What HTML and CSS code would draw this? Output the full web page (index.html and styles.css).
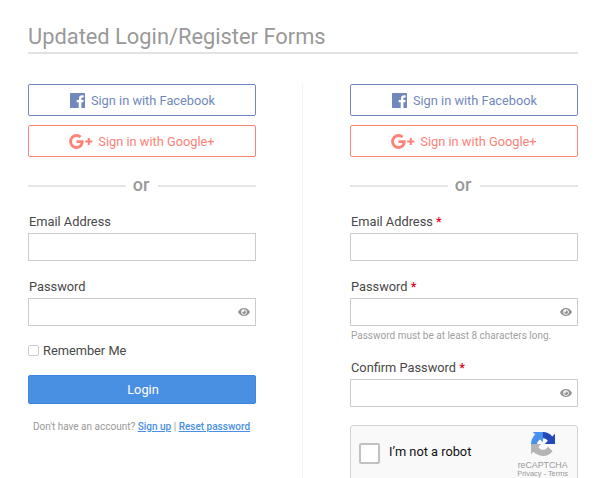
FILE: index.html
```html
<!DOCTYPE html>
<html lang="en">
<head>
    <meta charset="UTF-8">
    <meta name="viewport" content="width=device-width, initial-scale=1.0">
    <title>Login / Register</title>
    <link rel="stylesheet" href="styles.css">
</head>
<body>
<svg class="sprite" width="0" height="0">
    <symbol id="icon-facebook" viewBox="0 0 15 15">
        <path fill-rule="evenodd" d="M.7 0h13.6q.7 0 .7.7v13.6q0 .7-.7.7h-2.900V9.200h1.900l.3-2.300h-2.200V5.500c0-.7.2-1.100 1.100-1.100h1.200V2.400c-.3 0-.9-.1-1.700-.1-1.800 0-3 1.100-3 3v1.600H6.700v2.300h2V15H.7Q0 15 0 14.300V.7Q0 0 .7 0z"/>
    </symbol>
    <symbol id="icon-google" viewBox="0 0 24 15">
        <path d="M7.500 6.200v2.700h4c-.4 1.800-1.800 3.100-4 3.100a4.500 4.500 0 0 1 0-9c1.200 0 2.200.4 3 1.100l2.100-2.100A7.300 7.300 0 0 0 7.500.1a7.400 7.400 0 1 0 0 14.800c4.300 0 7.100-3 7.100-7.300 0-.5 0-.9-.1-1.400zM18.700 4v2.500h-2.500v2h2.500V11h2.100V8.500h2.500v-2h-2.500V4z"/>
    </symbol>
    <symbol id="icon-eye" viewBox="0 0 12 8">
        <path fill-rule="evenodd" d="M6 0C3.400 0 1.200 1.500 0 4c1.200 2.500 3.400 4 6 4s4.800-1.500 6-4C10.800 1.500 8.600 0 6 0zm0 1.200a2.800 2.800 0 1 1 0 5.600 2.800 2.800 0 0 1 0-5.600z"/>
        <path d="M6 2.200v1.600H4.200A1.900 1.900 0 1 0 6 2.200z"/>
    </symbol>
</svg>

<h1 class="page-title">Updated Login/Register Forms</h1>

<div class="forms">
    <form class="form">
        <button type="button" class="social facebook"><svg width="15" height="15"><use href="#icon-facebook"/></svg>Sign in with Facebook</button>
        <button type="button" class="social google"><svg width="24" height="15"><use href="#icon-google"/></svg>Sign in with Google+</button>
        <div class="or"><span>or</span></div>
        <div class="field">
            <label for="login-email">Email Address</label>
            <div class="input-box"><input type="email" id="login-email"></div>
        </div>
        <div class="field">
            <label for="login-password">Password</label>
            <div class="input-box">
                <input type="password" id="login-password">
                <svg class="eye" width="12" height="8"><use href="#icon-eye"/></svg>
            </div>
        </div>
        <label class="remember"><input type="checkbox">Remember Me</label>
        <button type="button" class="login-btn">Login</button>
        <p class="account">Don't have an account? <a href="#">Sign up</a> | <a href="#">Reset password</a></p>
    </form>

    <form class="form register">
        <button type="button" class="social facebook"><svg width="15" height="15"><use href="#icon-facebook"/></svg>Sign in with Facebook</button>
        <button type="button" class="social google"><svg width="24" height="15"><use href="#icon-google"/></svg>Sign in with Google+</button>
        <div class="or"><span>or</span></div>
        <div class="field">
            <label for="reg-email">Email Address <span class="required">*</span></label>
            <div class="input-box"><input type="email" id="reg-email"></div>
        </div>
        <div class="field">
            <label for="reg-password">Password <span class="required">*</span></label>
            <div class="input-box">
                <input type="password" id="reg-password">
                <svg class="eye" width="12" height="8"><use href="#icon-eye"/></svg>
            </div>
            <p class="hint">Password must be at least 8 characters long.</p>
        </div>
        <div class="field">
            <label for="reg-confirm">Confirm Password <span class="required">*</span></label>
            <div class="input-box">
                <input type="password" id="reg-confirm">
                <svg class="eye" width="12" height="8"><use href="#icon-eye"/></svg>
            </div>
        </div>
        <div class="captcha">
            <input type="checkbox" id="robot">
            <label for="robot">I’m not a robot</label>
            <div class="captcha-brand">
                <svg width="24" height="24" viewBox="0 0 64 64">
                    <path fill="#2348b8" d="M64 31.955l-.033-1.370V4.687l-7.160 7.160C50.948 4.674 42.033.093 32.050.093c-10.400 0-19.622 4.960-25.458 12.640l11.736 11.860a15.550 15.550 0 0 1 4.754-5.334c2.050-1.600 4.952-2.906 8.968-2.906.485 0 .86.057 1.135.163 4.976.393 9.288 3.140 11.828 7.124l-8.307 8.307L64 31.953"/>
                    <path fill="#4a90f0" d="M31.862.094l-1.370.033H4.594l7.160 7.160C4.580 13.147 0 22.062 0 32.046c0 10.400 4.960 19.622 12.640 25.458L24.500 45.768a15.550 15.550 0 0 1-5.334-4.754c-1.600-2.050-2.906-4.952-2.906-8.968 0-.485.057-.86.163-1.135.393-4.976 3.140-9.288 7.124-11.828l8.307 8.307L31.860.095"/>
                    <path fill="#b5b5b5" d="M.095 32.045l.033 1.370v25.898l7.160-7.160c5.860 7.173 14.774 11.754 24.758 11.754 10.400 0 19.622-4.960 25.458-12.640l-11.736-11.860a15.550 15.550 0 0 1-4.754 5.334c-2.050 1.600-4.952 2.906-8.968 2.906-.485 0-.86-.057-1.135-.163-4.976-.393-9.288-3.140-11.828-7.124l8.307-8.307L.095 32.045"/>
                </svg>
                <span class="captcha-name">reCAPTCHA</span>
                <span class="captcha-links">Privacy - Terms</span>
            </div>
        </div>
    </form>
</div>
</body>
</html>
```
FILE: styles.css
```css
* {
    box-sizing: border-box;
}
body {
    margin: 0;
    height: 478px;
    padding: 20px 32px 0 28px;
    overflow: hidden;
    background-color: #fff;
    color: #484848;
    font-family: Roboto, Arial, sans-serif;
    font-size: 12.8px;
}
.sprite {
    position: absolute;
}
.page-title {
    height: 34px;
    margin: 0 0 30px;
    border-bottom: 2px solid #e2e2e2;
    color: #999;
    font-size: 21.85px;
    font-weight: 400;
    line-height: 33px;
}
.forms {
    display: flex;
    height: 400px;
}
.form {
    width: 275px;
    padding-right: 47px;
    border-right: 1px solid #f3f3f3;
    flex-shrink: 0;
}
.form.register {
    margin-left: 47px;
    padding-right: 0;
    width: 228px;
    border-right: none;
}
.social {
    display: flex;
    align-items: center;
    justify-content: center;
    width: 228px;
    height: 32px;
    margin-bottom: 9px;
    padding: 0;
    border: 1px solid;
    border-radius: 2px;
    background: #fff;
    font-family: inherit;
    font-size: 12.8px;
    cursor: pointer;
}
.social svg {
    fill: currentColor;
}
.facebook {
    padding-left: 1px;
    color: #7188bd;
}
.facebook svg {
    margin-right: 6px;
}
.google {
    color: #fd8278;
}
.google svg {
    margin-right: 5px;
}
.or {
    display: flex;
    align-items: center;
    gap: 8px;
    width: 228px;
    height: 22px;
    margin: 18px 0 16px;
    color: #999;
    font-size: 18px;
    font-weight: 500;
}
.or span {
    padding: 0 1px 3px 0;
    margin-left: -1px;
}
.or::before, .or::after {
    content: "";
    flex: 1;
    height: 2px;
    background-color: #e5e5e5;
}
.field {
    width: 228px;
    margin-bottom: 17px;
}
.field label {
    display: block;
    height: 20px;
    padding-left: 1px;
    line-height: 17px;
}
.required {
    color: #e2001f;
    font-weight: 500;
}
.input-box {
    display: flex;
    align-items: center;
    height: 28px;
    padding-right: 5px;
    border: 1px solid #ccc;
}
.input-box input {
    flex: 1;
    min-width: 0;
    border: none;
    outline: none;
    background: none;
}
.eye {
    fill: #949494;
}
.hint {
    margin: 4px 0 0 1px;
    color: #a0a0a0;
    font-size: 10px;
    line-height: 12px;
}
.remember {
    display: flex;
    align-items: center;
    gap: 4px;
    height: 15px;
    margin-top: 17px;
}
.remember input {
    appearance: none;
    width: 11px;
    height: 11px;
    margin: 0;
    border: 1px solid #ccc;
    border-radius: 2px;
}
.login-btn {
    display: block;
    width: 228px;
    height: 29px;
    margin-top: 17px;
    padding: 0 0 0 2px;
    border: 1px solid #3d87e0;
    border-radius: 2px;
    background-color: #4a90e2;
    color: #fff;
    font-family: inherit;
    font-size: 12.8px;
    cursor: pointer;
}
.account {
    width: 227px;
    margin: 17px 0 0;
    color: #999;
    font-size: 10px;
    line-height: 12px;
    text-align: center;
    white-space: nowrap;
}
.account a {
    color: #4a90e2;
    font-weight: 500;
}
.captcha {
    display: flex;
    width: 228px;
    height: 62px;
    margin-top: 18px;
    padding: 0 9px 0 8px;
    border: 1px solid #d3d3d3;
    border-radius: 3px;
    background-color: #f9f9f9;
    color: #111;
}
.captcha input {
    appearance: none;
    width: 21px;
    height: 21px;
    margin: 17px 9px 0 0;
    border: 2px solid #c1c1c1;
    border-radius: 2px;
    background-color: #fff;
}
.captcha label {
    margin-top: 18px;
    line-height: 16px;
}
.captcha-brand {
    display: flex;
    flex-direction: column;
    align-items: center;
    margin-left: auto;
    padding-top: 6px;
    color: #999;
    font-family: "Liberation Sans", Arial, sans-serif;
    white-space: nowrap;
}
.captcha-name {
    margin-top: 4px;
    font-size: 8.8px;
    line-height: 10px;
}
.captcha-links {
    font-size: 7.4px;
    line-height: 8px;
}
```
